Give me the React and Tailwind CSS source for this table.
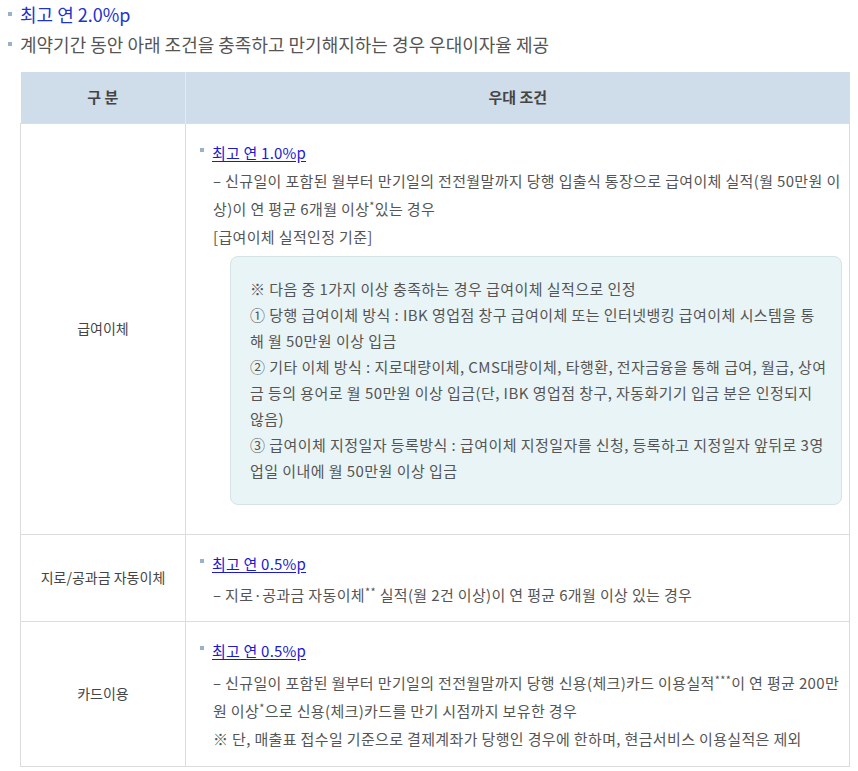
import React from "react";

const font = { fontFamily: '"Malgun Gothic", "Noto Sans CJK KR", "Noto Sans", sans-serif' };

function Bullet({ className = "" }) {
  return <span className={"inline-block w-[4px] h-[4px] bg-[#9bb0c9] align-middle " + className} />;
}

function Star({ children }) {
  return <span className="relative -top-[5px] text-[11px] leading-none">{children}</span>;
}

function LinkTitle({ children }) {
  return (
    <div className="flex items-center h-[28px]">
      <Bullet className="mr-[8px] -mt-[6px]" />
      <span className="text-[#1a1ad0] underline underline-offset-2 text-[15px] tracking-[0.2px]">{children}</span>
    </div>
  );
}

export default function App() {
  return (
    <div className="bg-white w-[858px] h-[771px] overflow-hidden text-[#555]" style={font}>
      <div className="pl-[8px]">
        <div className="flex items-center h-[28px]">
          <Bullet className="mr-[8px]" />
          <span className="text-[18px] text-[#2233cc]">최고 연 2.0%p</span>
        </div>
        <div className="flex items-center h-[30px] mt-[1px]">
          <Bullet className="mr-[8px]" />
          <span className="text-[18px] text-[#555]">계약기간 동안 아래 조건을 충족하고 만기해지하는 경우 우대이자율 제공</span>
        </div>
      </div>
      <table className="ml-[20px] mt-[13px] w-[830px] border-collapse table-fixed">
        <colgroup>
          <col className="w-[165px]" />
          <col />
        </colgroup>
        <thead>
          <tr className="h-[51px] bg-[#cfdce9]">
            <th className="border-r border-[#e6ebf0] text-[15px] font-bold text-[#444]">구 분</th>
            <th className="text-[15px] font-bold text-[#444]">우대 조건</th>
          </tr>
        </thead>
        <tbody className="text-[15px] tracking-[0.35px]">
          <tr className="border border-[#dcdcdc]">
            <td className="border-r border-[#dcdcdc] text-center align-middle text-[#444] text-[14px] tracking-normal">급여이체</td>
            <td className="pl-[14px] pr-[7px] pt-[15px] pb-[29px] align-top leading-[28px]">
              <LinkTitle>최고 연 1.0%p</LinkTitle>
              <div className="pl-[13px]">
                <div>– 신규일이 포함된 월부터 만기일의 전전월말까지 당행 입출식 통장으로 급여이체 실적(월 50만원 이상)이 연 평균 6개월 이상<Star>*</Star>있는 경우</div>
                <div>[급여이체 실적인정 기준]</div>
                <div className="mt-[5px] ml-[17px] bg-[#e9f4f6] border border-[#d3e3e6] rounded-[8px] pl-[19px] pr-[14px] pt-[19px] pb-[20px] leading-[26px] tracking-[0.44px]">
                  <div>※ 다음 중 1가지 이상 충족하는 경우 급여이체 실적으로 인정</div>
                  <div>① 당행 급여이체 방식 : IBK 영업점 창구 급여이체 또는 인터넷뱅킹 급여이체 시스템을 통해 월 50만원 이상 입금</div>
                  <div>② 기타 이체 방식 : 지로대량이체, CMS대량이체, 타행환, 전자금융을 통해 급여, 월급, 상여금 등의 용어로 월 50만원 이상 입금(단, IBK 영업점 창구, 자동화기기 입금 분은 인정되지 않음)</div>
                  <div>③ 급여이체 지정일자 등록방식 : 급여이체 지정일자를 신청, 등록하고 지정일자 앞뒤로 3영업일 이내에 월 50만원 이상 입금</div>
                </div>
              </div>
            </td>
          </tr>
          <tr className="border border-[#dcdcdc]">
            <td className="border-r border-[#dcdcdc] text-center align-middle text-[#444] text-[14px] tracking-normal">지로/공과금 자동이체</td>
            <td className="pl-[14px] pr-[7px] pt-[15px] pb-[12px] align-top leading-[28px]">
              <LinkTitle>최고 연 0.5%p</LinkTitle>
              <div className="pl-[13px] mt-[3px]">
                <div>– 지로·공과금 자동이체<Star>**</Star> 실적(월 2건 이상)이 연 평균 6개월 이상 있는 경우</div>
              </div>
            </td>
          </tr>
          <tr className="border border-[#dcdcdc]">
            <td className="border-r border-[#dcdcdc] text-center align-middle text-[#444] text-[14px] tracking-normal">카드이용</td>
            <td className="pl-[14px] pr-[7px] pt-[15px] pb-[13px] align-top leading-[28px]">
              <LinkTitle>최고 연 0.5%p</LinkTitle>
              <div className="pl-[13px] mt-[4px]">
                <div>– 신규일이 포함된 월부터 만기일의 전전월말까지 당행 신용(체크)카드 이용실적<Star>***</Star>이 연 평균 200만원 이상<Star>*</Star>으로 신용(체크)카드를 만기 시점까지 보유한 경우</div>
                <div>※ 단, 매출표 접수일 기준으로 결제계좌가 당행인 경우에 한하며, 현금서비스 이용실적은 제외</div>
              </div>
            </td>
          </tr>
        </tbody>
      </table>
    </div>
  );
}
